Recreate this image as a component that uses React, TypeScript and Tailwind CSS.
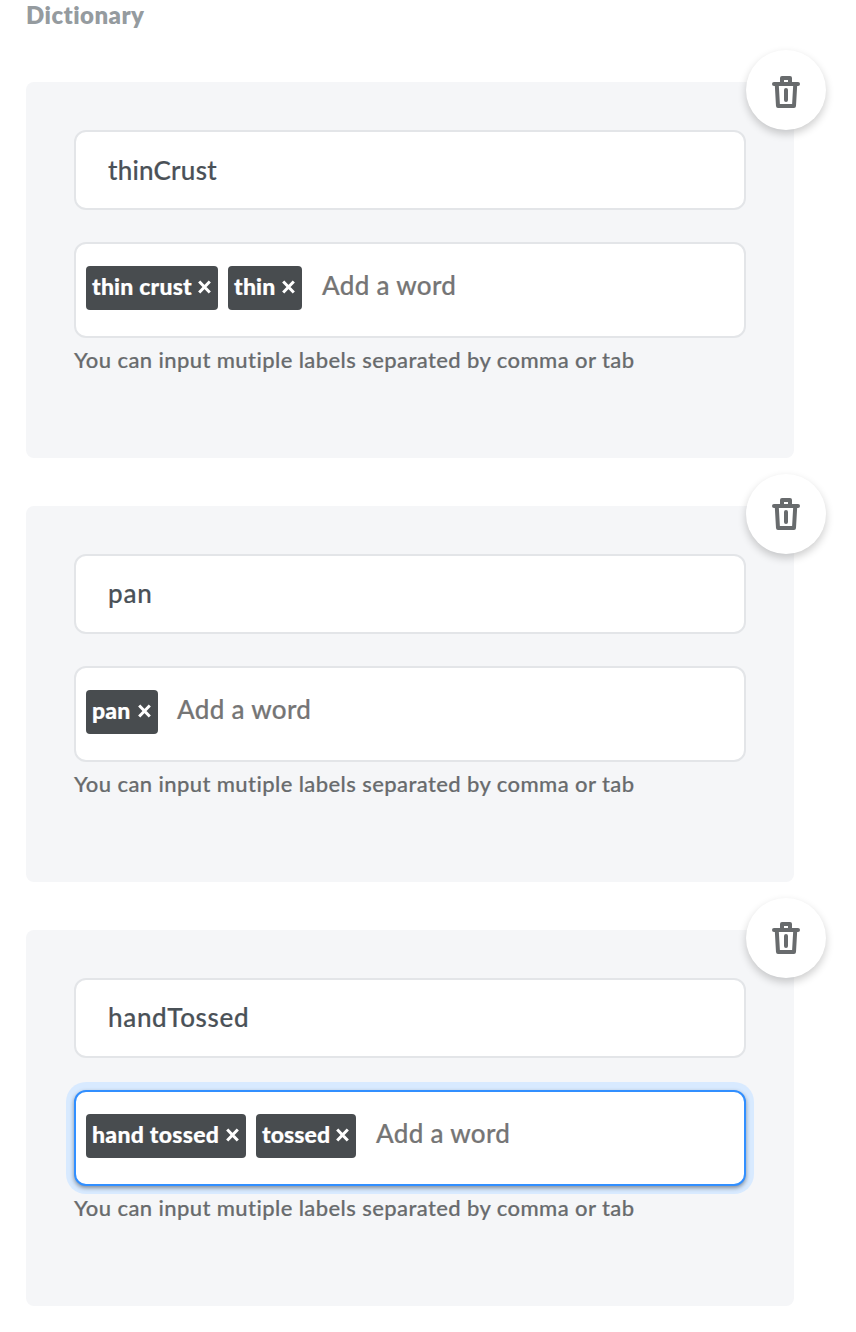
type Tag = { label: string; box: string; text: string };
type Entry = {
  name: string;
  nameStyle: string;
  tags: Tag[];
  focused?: boolean;
  iconStyle: string;
  placeholderStyle: string;
};

const entries: Entry[] = [
  {
    name: "thinCrust",
    nameStyle: "tracking-[0.25px]",
    iconStyle: "mt-1",
    placeholderStyle: "ml-[20px]",
    tags: [
      { label: "thin crust", box: "w-[132px]", text: "tracking-[0.2px]" },
      { label: "thin", box: "w-[74px]", text: "tracking-[0.2px]" },
    ],
  },
  {
    name: "pan",
    nameStyle: "tracking-[0.8px] pb-[2px]",
    iconStyle: "mt-0",
    placeholderStyle: "ml-[19px]",
    tags: [{ label: "pan", box: "w-[72px]", text: "tracking-[0.2px]" }],
  },
  {
    name: "handTossed",
    nameStyle: "tracking-[0.68px] pb-[2px]",
    iconStyle: "mt-0",
    placeholderStyle: "ml-[20px]",
    focused: true,
    tags: [
      { label: "hand tossed", box: "w-[160px]", text: "tracking-[0.28px]" },
      { label: "tossed", box: "w-[100px]", text: "tracking-[0.1px]" },
    ],
  },
];

function TrashIcon() {
  return (
    <svg width="28" height="32" viewBox="0 0 28 32" fill="none" stroke="#686b6d" strokeWidth="4" strokeLinecap="round" strokeLinejoin="round">
      <path d="M2 8H26" />
      <path d="M10 7V2H18V7" />
      <path d="M4.8 9L6 30H22L23.2 9" />
      <path d="M14 14V24" />
    </svg>
  );
}

function CloseIcon() {
  return (
    <svg width="13" height="14" viewBox="0 0 13 14" fill="none" stroke="#fff" strokeWidth="3" className="shrink-0">
      <path d="M1.2 1.5L11.8 12.5M11.8 1.5L1.2 12.5" />
    </svg>
  );
}

function DictionaryCard({ entry }: { entry: Entry }) {
  return (
    <section className="relative h-[376px] w-[768px] rounded-lg bg-[#f5f6f8] p-12">
      <button className="absolute -top-8 -right-8 flex h-20 w-20 items-center justify-center rounded-full bg-white shadow-[0_4px_8px_rgba(0,0,0,0.2)]" aria-label="Delete">
        <span className={entry.iconStyle}>
          <TrashIcon />
        </span>
      </button>
      <div className="flex h-20 items-center rounded-xl border-2 border-[#e3e5e8] bg-white px-8">
        <span className={`text-[26px] leading-8 font-medium whitespace-nowrap text-[#4a5157] [-webkit-text-stroke:0.2px_#4a5157] ${entry.nameStyle}`}>{entry.name}</span>
      </div>
      <div
        className={`mt-8 flex h-24 items-start rounded-xl border-2 bg-white pt-[22px] pl-[10px] ${
          entry.focused
            ? "border-[#318fff] shadow-[0_2px_4px_rgba(0,0,0,0.4),0_0_0_8px_#d8eaff]"
            : "border-[#e3e5e8]"
        }`}
      >
        <div className="flex gap-[10px]">
          {entry.tags.map((tag) => (
            <span key={tag.label} className={`flex h-11 items-start justify-between rounded bg-[#484c4f] pt-[4px] pr-[7px] pl-[6px] text-white ${tag.box}`}>
              <span className={`text-[23px] leading-8 font-black whitespace-nowrap [-webkit-text-stroke:0.2px_#fff] ${tag.text}`}>{tag.label}</span>
              <span className="pt-[10px]">
                <CloseIcon />
              </span>
            </span>
          ))}
        </div>
        <span className={`pt-[3px] text-[26px] leading-8 font-medium tracking-[0.32px] whitespace-nowrap text-[#757575] [-webkit-text-stroke:0.2px_#757575] ${entry.placeholderStyle}`}>Add a word</span>
      </div>
      <p className="mt-[6px] text-[22px] leading-8 font-medium tracking-[0.41px] whitespace-nowrap text-[#686b6d] [-webkit-text-stroke:0.2px_#686b6d]">
        You can input mutiple labels separated by comma or tab
      </p>
    </section>
  );
}

export default function App() {
  return (
    <main className="h-[1332px] w-[856px] overflow-hidden bg-white pl-[26px] font-['Lato',sans-serif] [font-variant-ligatures:none]">
      <h1 className="h-[82px] text-[24px] leading-[30px] font-extrabold tracking-[0.45px] text-[#959b9f]">Dictionary</h1>
      <div className="flex flex-col gap-12">
        {entries.map((entry) => (
          <DictionaryCard key={entry.name} entry={entry} />
        ))}
      </div>
    </main>
  );
}
